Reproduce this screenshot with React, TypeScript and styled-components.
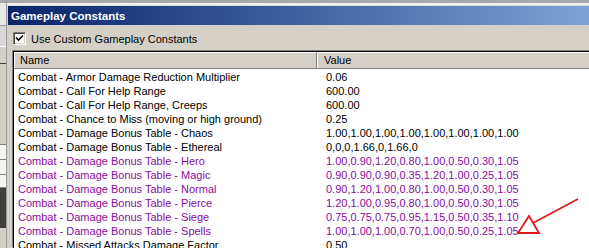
import React from "react";
import styled, { createGlobalStyle } from "styled-components";

const Global = createGlobalStyle`
  html, body { margin: 0; padding: 0; overflow: hidden; background: #d4d0c8; }
  body { width: 589px; height: 248px; font-family: "Liberation Sans", Arial, sans-serif; }
`;

const Page = styled.div`
  position: relative;
  display: flex;
  width: 589px;
  height: 248px;
  overflow: hidden;
  background: #d4d0c8;
`;

const LeftStrip = styled.div`
  width: 6px;
  flex: none;
  display: flex;
  flex-direction: column;
  background: #d4d0c8;
  border-right: 1px solid #9a9a9a;
`;

const StripPiece = styled.div<{ $h: number; $bg: string; $line?: string }>`
  height: ${(p) => p.$h}px;
  background: ${(p) => p.$bg};
  border-bottom: ${(p) => (p.$line ? `1px solid ${p.$line}` : "none")};
  flex: none;
`;

const Window = styled.div`
  flex: 1;
  display: flex;
  flex-direction: column;
  min-width: 0;
`;

const TopBand = styled.div`
  height: 6px;
  flex: none;
  background: linear-gradient(#a8a8a8 0 3px, #f2f2f2 3px 5px, #dcdcdc 5px);
`;

const TitleBar = styled.div`
  height: 19px;
  flex: none;
  display: flex;
  align-items: center;
  padding-left: 3px;
  margin-left: 1px;
  background: linear-gradient(90deg, #0a246a 0%, #3a5a9a 45%, #7fa2d6 100%);
  color: #fff;
  font-family: "Liberation Sans", Arial, sans-serif;
  font-weight: bold;
  font-size: 11.5px;
`;

const Body = styled.div`
  flex: 1;
  display: flex;
  flex-direction: column;
  padding: 7px 0 0 6px;
  min-height: 0;
`;

const CheckRow = styled.label`
  display: flex;
  align-items: center;
  gap: 5px;
  height: 13px;
  font-size: 11px;
  color: #000;
`;

const CheckBox = styled.span`
  width: 13px;
  height: 13px;
  box-sizing: border-box;
  background: #fff;
  border-style: solid;
  border-width: 1px;
  border-color: #808080 #ffffff #ffffff #808080;
  box-shadow: inset 1px 1px 0 #404040, inset -1px -1px 0 #d4d0c8;
  display: flex;
  align-items: center;
  justify-content: center;
`;

const ListBox = styled.div`
  margin-top: 6px;
  flex: 1;
  min-height: 0;
  background: #fff;
  border-top: 1px solid #000;
  border-left: 1px solid #000;
  box-shadow: -1px -1px 0 #808080;
  display: flex;
  flex-direction: column;
  width: 700px;
`;

const Header = styled.div`
  display: grid;
  grid-template-columns: 303px 1fr;
  height: 16px;
  flex: none;
  background: #d4d0c8;
  border-bottom: 1px solid #808080;
  box-shadow: inset 1px 1px 0 #ffffff;
`;

const HeaderCell = styled.div<{ $divider?: boolean }>`
  display: flex;
  align-items: center;
  padding-left: ${(p) => (p.$divider ? "6px" : "7px")};
  font-size: 11px;
  color: #000;
  border-right: ${(p) => (p.$divider ? "1px solid #808080" : "none")};
  box-shadow: ${(p) => (p.$divider ? "1px 0 0 #ffffff" : "none")};
`;

const Rows = styled.div`
  padding-top: 1px;
  display: flex;
  flex-direction: column;
`;

const Row = styled.div<{ $custom?: boolean }>`
  display: grid;
  grid-template-columns: 308px 1fr;
  height: 14px;
  line-height: 14px;
  font-size: 11px;
  color: ${(p) => (p.$custom ? "#8a0c9c" : "#000")};
  white-space: nowrap;
`;

const Cell = styled.div`
  padding-left: 4px;
  overflow: hidden;
`;

const Arrow = styled.svg`
  position: absolute;
  left: 0;
  top: 0;
  pointer-events: none;
`;

const rows: { name: string; value: string; custom?: boolean }[] = [
  { name: "Combat - Armor Damage Reduction Multiplier", value: "0.06" },
  { name: "Combat - Call For Help Range", value: "600.00" },
  { name: "Combat - Call For Help Range, Creeps", value: "600.00" },
  { name: "Combat - Chance to Miss (moving or high ground)", value: "0.25" },
  { name: "Combat - Damage Bonus Table - Chaos", value: "1.00,1.00,1.00,1.00,1.00,1.00,1.00,1.00" },
  { name: "Combat - Damage Bonus Table - Ethereal", value: "0,0,0,1.66,0,1.66,0" },
  { name: "Combat - Damage Bonus Table - Hero", value: "1.00,0.90,1.20,0.80,1.00,0.50,0.30,1.05", custom: true },
  { name: "Combat - Damage Bonus Table - Magic", value: "0.90,0.90,0.90,0.35,1.20,1.00,0.25,1.05", custom: true },
  { name: "Combat - Damage Bonus Table - Normal", value: "0.90,1.20,1.00,0.80,1.00,0.50,0.30,1.05", custom: true },
  { name: "Combat - Damage Bonus Table - Pierce", value: "1.20,1.00,0.95,0.80,1.00,0.50,0.30,1.05", custom: true },
  { name: "Combat - Damage Bonus Table - Siege", value: "0.75,0.75,0.75,0.95,1.15,0.50,0.35,1.10", custom: true },
  { name: "Combat - Damage Bonus Table - Spells", value: "1.00,1.00,1.00,0.70,1.00,0.50,0.25,1.05", custom: true },
  { name: "Combat - Missed Attacks Damage Factor", value: "0.50" },
];

export default function App() {
  return (
    <Page>
      <Global />
      <LeftStrip>
        <StripPiece $h={3} $bg="#a8a8a8" />
        <StripPiece $h={22} $bg="#e8e8e8" $line="#9a9a9a" />
        <StripPiece $h={20} $bg="#d8d8d8" $line="#ffffff" />
        <StripPiece $h={16} $bg="#d4d0c8" $line="#404040" />
        <StripPiece $h={80} $bg="#d4d0c8" $line="#808080" />
        <StripPiece $h={14} $bg="#f4f4f4" $line="#808080" />
        <StripPiece $h={14} $bg="#f4f4f4" $line="#808080" />
        <StripPiece $h={12} $bg="#f4f4f4" $line="#808080" />
        <StripPiece $h={40} $bg="#404040" />
      </LeftStrip>
      <Window>
        <TopBand />
        <TitleBar>Gameplay Constants</TitleBar>
        <Body>
          <CheckRow>
            <CheckBox>
              <svg width="9" height="9" viewBox="0 0 9 9">
                <path d="M1 3.5 L3.5 6 L8 1.5" stroke="#000" strokeWidth="1.6" fill="none" />
              </svg>
            </CheckBox>
            Use Custom Gameplay Constants
          </CheckRow>
          <ListBox>
            <Header>
              <HeaderCell $divider>Name</HeaderCell>
              <HeaderCell>Value</HeaderCell>
            </Header>
            <Rows>
              {rows.map((r) => (
                <Row key={r.name} $custom={r.custom}>
                  <Cell>{r.name}</Cell>
                  <Cell>{r.value}</Cell>
                </Row>
              ))}
            </Rows>
          </ListBox>
        </Body>
      </Window>
      <Arrow width="589" height="248" viewBox="0 0 589 248">
        <polygon points="518,233 539,233 529,216" fill="none" stroke="#e01818" strokeWidth="1.8" />
        <line x1="533" y1="223" x2="578" y2="199" stroke="#e01818" strokeWidth="1.8" />
      </Arrow>
    </Page>
  );
}
